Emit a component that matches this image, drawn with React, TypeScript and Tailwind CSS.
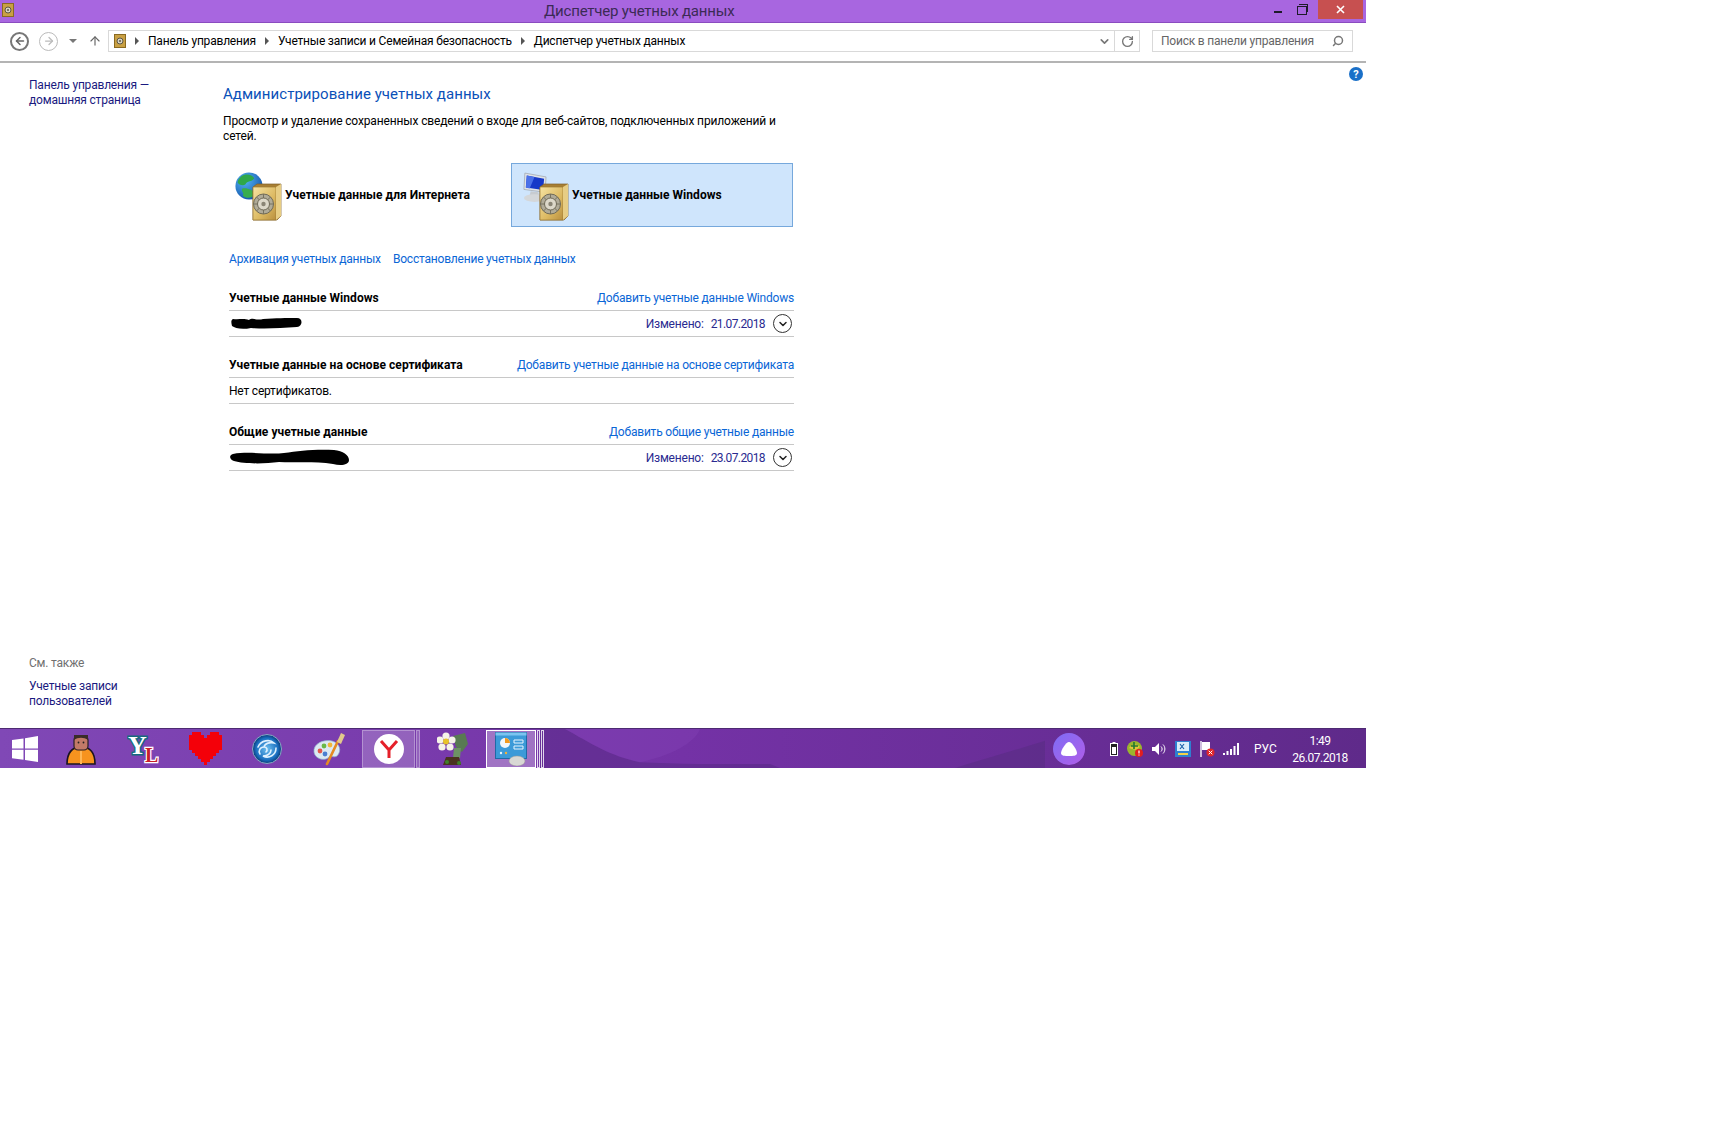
import { ChevronDown, RotateCw, Search, ArrowUp, ArrowLeft, ArrowRight } from 'lucide-react';

const font = { fontFamily: 'Roboto, "Open Sans", sans-serif' };

const Safe = ({ className = '', id }: { className?: string; id: string }) => (
  <svg viewBox="0 0 30 38" className={className}>
    <defs>
      <linearGradient id={id} x1="0" y1="0" x2="1" y2="1">
        <stop offset="0" stopColor="#f6e3a2" />
        <stop offset="0.6" stopColor="#dcb961" />
        <stop offset="1" stopColor="#b98f3e" />
      </linearGradient>
    </defs>
    <path d="M1 4 L5 1 L29 1 L29 33 L25 37 L1 37 Z" fill="#a87f33" stroke="#80602a" strokeWidth="0.7" />
    <path d="M1 4 L24 4 L24 37 L1 37 Z" fill={`url(#${id})`} stroke="#9c7831" strokeWidth="0.7" />
    <path d="M24 4 L29 1 L29 33 L24 37 Z" fill="#e7cd84" />
    <circle cx="11.5" cy="21" r="10" fill="#b0ab98" stroke="#6f6a58" strokeWidth="1" />
    <path d="M4.5 14 L18.5 28 M18.5 14 L4.5 28 M11.5 11 V31 M1.5 21 H21.5" stroke="#77725f" strokeWidth="1" />
    <circle cx="11.5" cy="21" r="6" fill="#dcd8c9" stroke="#6f6a58" strokeWidth="1" />
    <circle cx="11.5" cy="21" r="2.2" fill="#8a8575" />
  </svg>
);

const MiniSafe = ({ className = '' }: { className?: string }) => (
  <svg viewBox="0 0 12 14" className={className}>
    <rect x="0.5" y="0.5" width="11" height="13" fill="#c9a043" stroke="#8a6a20" />
    <circle cx="6" cy="7" r="3" fill="#d9d4c0" stroke="#5c5647" />
    <circle cx="6" cy="7" r="1" fill="#5c5647" />
  </svg>
);

const Globe = () => (
  <svg viewBox="0 0 32 32" className="w-[28px] h-[28px]">
    <defs>
      <radialGradient id="globeSea" cx="0.35" cy="0.3" r="0.8">
        <stop offset="0" stopColor="#53b4f2" />
        <stop offset="1" stopColor="#0f4fa8" />
      </radialGradient>
    </defs>
    <circle cx="16" cy="16" r="15.5" fill="url(#globeSea)" />
    <path d="M7 5 C12 1 20 3 22 7 C19 12 14 9 12 14 C9 17 4 14 3 12 C3 9 5 7 7 5 Z" fill="#2fa84a" />
    <path d="M8 19 C13 17 20 21 24 24 C21 30 13 31 9 27 C11 24 7 22 8 19 Z" fill="#38ad4e" />
  </svg>
);

const Monitor = () => (
  <svg viewBox="0 0 26 32" className="w-[25px] h-[31px]">
    <path d="M3 1 L25 5 L24 21 L2 18 Z" fill="#dfe3e8" stroke="#9aa0a8" strokeWidth="0.7" />
    <path d="M5 3.5 L23 7 L22 18.5 L4 16 Z" fill="#1638c8" />
    <path d="M5 3.5 L13 5 L8 17 L4 16 Z" fill="#4a70e8" />
    <path d="M9 20 L17 21 L18 25 L8 24 Z" fill="#c7cbd0" />
    <ellipse cx="13" cy="27" rx="11" ry="4" fill="#d4d7da" />
  </svg>
);

const Tile = ({ icon, label, active, id }: { icon: React.ReactNode; label: string; active?: boolean; id: string }) => (
  <div
    className={
      active
        ? 'flex items-center h-[64px] w-[282px] border border-[#76a8dc] bg-[#cfe5fc] pl-[10px]'
        : 'flex items-center h-[64px] w-[288px] border border-transparent pl-[11px]'
    }
  >
    <div className="relative w-[47px] h-[49px] shrink-0 self-start mt-[8px]">
      {icon}
      <Safe id={id} className="absolute right-0 bottom-0 w-[30px] h-[38px]" />
    </div>
    <span className="ml-[3px] text-[12px] font-bold tracking-[0.05px] text-black">{label}</span>
  </div>
);

const Blob = ({ w, h, d }: { w: number; h: number; d: string }) => (
  <svg width={w} height={h} viewBox={`0 0 ${w} ${h}`}>
    <path d={d} fill="#000" />
  </svg>
);

const Expand = () => (
  <span className="w-[19px] h-[19px] rounded-full border border-[#333] flex items-center justify-center">
    <ChevronDown size={12} strokeWidth={3} color="#222" />
  </span>
);

const Section = ({ title, link, children }: { title: string; link: string; children: React.ReactNode }) => (
  <section className="w-[565px]">
    <div className="flex justify-between items-center h-[25px] border-b border-[#c8c8c8] pb-[1px]">
      <span className="text-[12px] font-bold tracking-[0.05px] text-black">{title}</span>
      <span className="text-[12px] text-[#0a66d6]">{link}</span>
    </div>
    <div className="flex items-center justify-between h-[26px] border-b border-[#c8c8c8]">{children}</div>
  </section>
);

const Changed = ({ date }: { date: string }) => (
  <div className="flex items-center text-[12px] text-[#2a2a90]">
    <span>Изменено:</span>
    <span className="ml-[7px] tracking-[-0.6px]">{date}</span>
    <span className="ml-[8px] mr-[2px]">
      <Expand />
    </span>
  </div>
);

const Crumb = ({ label }: { label: string }) => (
  <>
    <span className="mx-[9px] w-0 h-0 border-y-[4px] border-y-transparent border-l-[4px] border-l-[#555]" />
    <span>{label}</span>
  </>
);

const Slot = ({ children, className = 'w-[62px]' }: { children: React.ReactNode; className?: string }) => (
  <div className={`${className} h-full flex items-center justify-center shrink-0`}>{children}</div>
);

const WinLogo = () => (
  <svg viewBox="0 0 26 26" className="w-[26px] h-[26px]">
    <path d="M0 4 L11.5 2.4 V12.4 H0 Z M13 2.2 L26 0 V12.4 H13 Z M0 13.8 H11.5 V23.8 L0 22.2 Z M13 13.8 H26 V26 L13 24 Z" fill="#fff" />
  </svg>
);

const Person = () => (
  <svg viewBox="0 0 30 32" className="w-[30px] h-[32px]">
    <path d="M1 31 C1 20 6 14 15 14 C24 14 29 20 29 31 Z" fill="#f7931e" stroke="#1a1420" strokeWidth="1.6" />
    <path d="M15 18v13" stroke="#ffb655" strokeWidth="2" />
    <rect x="8" y="3" width="14" height="14" rx="4" fill="#c27a68" stroke="#2b2026" strokeWidth="1.2" />
    <path d="M8 7 V2 H22 V7 C18 4 12 4 8 7 Z" fill="#3a2c28" />
    <circle cx="12.5" cy="9.5" r="0.9" fill="#222" />
    <circle cx="17.5" cy="9.5" r="0.9" fill="#222" />
  </svg>
);

const YL = () => (
  <svg viewBox="0 -3 32 38" className="w-[32px] h-[38px]">
    <text x="1" y="21" fontFamily="Liberation Serif" fontWeight="700" fontSize="26" fill="#fff" stroke="#16697f" strokeWidth="3" paintOrder="stroke">Y</text>
    <text x="18" y="29" fontFamily="Liberation Serif" fontWeight="700" fontSize="20" fill="#c8202a" stroke="#fff" strokeWidth="2.4" paintOrder="stroke">L</text>
  </svg>
);

const Heart = () => (
  <svg viewBox="0 0 11 11" className="w-[33px] h-[33px]" shapeRendering="crispEdges">
    <path d="M1 0 H4 V1 H5 V2 H6 V1 H7 V0 H10 V1 H11 V6 H10 V7 H9 V8 H8 V9 H7 V10 H6 V11 H5 V10 H4 V9 H3 V8 H2 V7 H1 V6 H0 V1 H1 Z" fill="#f40009" />
  </svg>
);

const Spiral = () => (
  <svg viewBox="0 0 30 30" className="w-[30px] h-[30px]">
    <defs>
      <radialGradient id="spiralBg">
        <stop offset="0" stopColor="#6fc0f0" />
        <stop offset="0.75" stopColor="#1a6fc0" />
        <stop offset="1" stopColor="#0b3c78" />
      </radialGradient>
    </defs>
    <circle cx="15" cy="15" r="14.5" fill="url(#spiralBg)" stroke="#8aa8c4" />
    <path d="M6 13 C9 6 18 5 22 9 C18 8 13 9 12 13 M24 14 C24 21 17 25 11 22 C15 22 19 20 19 16 M8 20 C6 17 8 13 12 13 C15 13 16 16 14 18" fill="none" stroke="#dff1ff" strokeWidth="1.6" strokeLinecap="round" />
  </svg>
);

const Palette = () => (
  <svg viewBox="0 0 34 34" className="w-[34px] h-[34px]">
    <path d="M2 20 C1 12 11 7 20 9 C28 11 30 19 25 24 C22 26 19 23 16 26 C12 29 3 27 2 20 Z" fill="#dce9f2" stroke="#8fb4cc" strokeWidth="0.7" />
    <circle cx="8" cy="19" r="2.4" fill="#e4574c" />
    <circle cx="12" cy="14" r="2.4" fill="#6ab845" />
    <circle cx="18" cy="13" r="2.4" fill="#f0b63a" />
    <circle cx="13" cy="22" r="2.4" fill="#4a7fd0" />
    <path d="M15 32 L26 9" stroke="#e58a22" strokeWidth="2.6" strokeLinecap="round" />
    <path d="M25 10 L29 1 L33 3 L29 12 Z" fill="#e2c98c" />
  </svg>
);

const YandexCircle = () => (
  <span className="w-[30px] h-[30px] rounded-full bg-white flex items-center justify-center">
    <svg viewBox="0 0 20 20" className="w-[20px] h-[20px]">
      <path d="M2 2 L10 11 L18 2 M10 11 V19" fill="none" stroke="#e5202a" strokeWidth="3" />
    </svg>
  </span>
);

const Flower = () => (
  <svg viewBox="0 0 32 34" className="w-[32px] h-[34px]">
    <path d="M16 4 L28 1 L31 12 L25 20 L19 15 Z" fill="#587a52" />
    <path d="M17 16 L24 16 L23 26 L16 26 Z" fill="#6d9265" />
    <path d="M9 25 L22 25 L24 33 L6 33 Z" fill="#4a3220" />
    <circle cx="10" cy="30" r="2" fill="#3f7f2a" />
    <circle cx="22" cy="31" r="2" fill="#3f7f2a" />
    <g fill="#f6f3e8">
      <circle cx="9" cy="4" r="3.6" />
      <circle cx="15" cy="8" r="3.6" />
      <circle cx="13" cy="15" r="3.6" />
      <circle cx="5" cy="15" r="3.6" />
      <circle cx="3" cy="8" r="3.6" />
    </g>
    <circle cx="9" cy="9.5" r="3" fill="#e8c22a" />
  </svg>
);

const ControlPanel = () => (
  <svg viewBox="0 0 32 34" className="w-[32px] h-[34px]">
    <rect x="0.5" y="0.5" width="31" height="26" fill="#3c9ad8" stroke="#1f6aa6" />
    <rect x="0.5" y="0.5" width="31" height="3" fill="#7cc4f0" />
    <circle cx="10" cy="11" r="5" fill="#f2f6fa" />
    <path d="M10 11 V6 A5 5 0 0 1 15 11 Z" fill="#f39a1e" />
    <path d="M19 8h9v3h-9z M19 14h9v3h-9z" fill="none" stroke="#e8f5ff" />
    <circle cx="6" cy="21" r="1.2" fill="#e8f5ff" />
    <circle cx="11" cy="21" r="1.2" fill="#f3b23a" />
    <ellipse cx="22" cy="29" rx="8" ry="5" fill="#d8d8d4" stroke="#9a9a96" strokeWidth="0.5" />
  </svg>
);

const Tray = () => (
  <div className="ml-auto flex items-center h-full">
    <span className="w-[32px] h-[32px] rounded-full bg-gradient-to-br from-[#7c6cf5] to-[#b05ce8] flex items-center justify-center">
      <svg viewBox="0 0 16 14" className="w-[16px] h-[14px]">
        <path d="M8 0 C11 0 16 8 16 11 C16 14 12 14 8 14 C4 14 0 14 0 11 C0 8 5 0 8 0 Z" fill="#fff" />
      </svg>
    </span>
    <svg viewBox="0 0 8 14" className="ml-[25px] w-[8px] h-[14px]">
      <rect x="2.5" y="0" width="3" height="2" fill="#fff" />
      <rect x="0.5" y="1.5" width="7" height="12" fill="#222" stroke="#fff" />
      <rect x="2" y="5" width="4" height="7" fill="#fff" />
    </svg>
    <svg viewBox="0 0 16 16" className="ml-[9px] w-[16px] h-[16px]">
      <circle cx="7.5" cy="7.5" r="7.5" fill="#9ab52e" />
      <path d="M2 7 C6 2 10 3 13 6 L9 9 L5 8 Z" fill="#e8c43a" />
      <path d="M7 1 v7 M4 5 h7" stroke="#1f7a30" strokeWidth="1.6" />
      <circle cx="12" cy="12" r="4" fill="#e01f1f" />
      <path d="M12 9.5 v3 M12 13.5 v1" stroke="#fff" strokeWidth="1.2" />
    </svg>
    <svg viewBox="0 0 14 14" className="ml-[9px] w-[14px] h-[14px]">
      <path d="M0 5 H3 L7 1 V13 L3 9 H0 Z" fill="#fff" />
      <path d="M9 4.5 C10.5 6 10.5 8 9 9.5 M11 2.5 C13.5 5 13.5 9 11 11.5" fill="none" stroke="#fff" />
    </svg>
    <svg viewBox="0 0 16 16" className="ml-[9px] w-[16px] h-[16px]">
      <rect width="16" height="16" fill="#2f7fd0" />
      <rect x="2" y="1" width="12" height="9" fill="#d8ecfa" />
      <path d="M5 3 L9 8 M9 3 L5 8" stroke="#1a5fa8" strokeWidth="1.2" />
      <path d="M3 13 H13" stroke="#f2d24a" strokeWidth="2" />
    </svg>
    <svg viewBox="0 0 15 16" className="ml-[9px] w-[15px] h-[16px]">
      <path d="M1 0 V16" stroke="#fff" strokeWidth="1.4" />
      <path d="M2 1 H10 V9 H2 Z" fill="#fff" />
      <circle cx="10.5" cy="11.5" r="4" fill="#e0262a" />
      <path d="M8.7 9.7 L12.3 13.3 M12.3 9.7 L8.7 13.3" stroke="#fff" />
    </svg>
    <svg viewBox="0 0 16 12" className="ml-[8px] w-[16px] h-[12px]">
      <path d="M0 10h2v2H0z M3.5 8h2v4h-2z M7 6h2v6H7z M10.5 3h2v9h-2z M14 0h2v12h-2z" fill="#fff" />
    </svg>
    <span className="ml-[15px] w-[22px] text-[12px] tracking-normal text-white">РУС</span>
    <div className="ml-[17px] mr-[19px] w-[54px] pt-[3px] flex flex-col items-center text-[12px] leading-[17px] tracking-[-0.5px] text-white">
      <span>1:49</span>
      <span>26.07.2018</span>
    </div>
  </div>
);

export default function App() {
  return (
    <div className="w-[1366px] h-[768px] flex flex-col bg-white text-[12px] tracking-[-0.2px] text-black" style={font}>
      <header className="h-[23px] shrink-0 flex bg-[#a866e0] border-b border-[#8a4cc0]">
        <MiniSafe className="mt-[3px] ml-[2px] w-[12px] h-[14px]" />
        <span className="ml-[530px] text-[15px] leading-[23px] text-[#3b2a55]">Диспетчер учетных данных</span>
        <div className="ml-auto mr-[3px] flex items-start">
          <span className="mt-[11px] w-[8px] h-[2px] bg-[#1d1a2a]" />
          <span className="relative ml-[15px] mt-[6px] w-[10px] h-[9px] border border-[#1d1a2a]">
            <span className="absolute -top-[3px] left-[1px] w-[9px] h-[8px] border-t border-r border-[#1d1a2a]" />
          </span>
          <div className="ml-[11px] w-[45px] h-[19px] bg-[#c75050] flex items-center justify-center">
            <svg viewBox="0 0 9 9" className="w-[9px] h-[9px]">
              <path d="M1 1 L8 8 M8 1 L1 8" stroke="#fff" strokeWidth="1.6" />
            </svg>
          </div>
        </div>
      </header>

      <div className="h-[40px] shrink-0 flex items-center border-b-2 border-b-[#b4b4b4] pb-[2px]">
        <span className="ml-[10px] w-[19px] h-[19px] rounded-full border-2 border-[#777] flex items-center justify-center">
          <ArrowLeft size={12} strokeWidth={3} color="#666" />
        </span>
        <span className="ml-[10px] w-[19px] h-[19px] rounded-full border border-[#bbb] flex items-center justify-center">
          <ArrowRight size={12} strokeWidth={2.5} color="#bbb" />
        </span>
        <span className="ml-[11px] w-0 h-0 border-x-[4px] border-x-transparent border-t-[4px] border-t-[#777]" />
        <ArrowUp size={14} strokeWidth={2} color="#666" className="ml-[11px]" />
        <div className="ml-[6px] w-[1032px] h-[22px] flex items-center border border-[#d9d9d9]">
          <MiniSafe className="ml-[5px] w-[12px] h-[14px]" />
          <Crumb label="Панель управления" />
          <Crumb label="Учетные записи и Семейная безопасность" />
          <Crumb label="Диспетчер учетных данных" />
          <ChevronDown size={13} strokeWidth={3} color="#777" className="ml-auto mr-[3px]" />
          <div className="h-full w-[25px] border-l border-[#d9d9d9] flex items-center justify-center">
            <RotateCw size={13} strokeWidth={2.5} color="#777" />
          </div>
        </div>
        <div className="ml-[12px] w-[201px] h-[22px] flex items-center justify-between border border-[#d9d9d9] px-[8px] text-[#666]">
          <span>Поиск в панели управления</span>
          <Search size={12} strokeWidth={3} color="#777" className="-scale-x-100" />
        </div>
      </div>

      <main className="flex-1 flex">
        <aside className="w-[223px] shrink-0 flex flex-col justify-between pl-[29px] pt-[15px] pb-[19px] leading-[15px] text-[#1a1a80]">
          <div>
            Панель управления —
            <br />
            домашняя страница
          </div>
          <div>
            <div className="text-[#707070] mb-[8px]">См. также</div>
            Учетные записи
            <br />
            пользователей
          </div>
        </aside>
        <div className="w-[575px] shrink-0 pt-[21px]">
          <h1 className="text-[15px] leading-[20px] font-normal tracking-[0.05px] text-[#0a50b8]">Администрирование учетных данных</h1>
          <p className="mt-[10px] w-[565px] leading-[15px] tracking-[-0.14px]">
            Просмотр и удаление сохраненных сведений о входе для веб-сайтов, подключенных приложений и
            <br />
            сетей.
          </p>
          <div className="mt-[19px] flex">
            <Tile id="safeA" label="Учетные данные для Интернета" icon={<div className="absolute left-0 top-0"><Globe /></div>} />
            <Tile id="safeB" active label="Учетные данные Windows" icon={<div className="absolute left-0 top-0"><Monitor /></div>} />
          </div>
          <div className="mt-[23px] ml-[6px] flex gap-[12px] text-[#0a66d6]">
            <span>Архивация учетных данных</span>
            <span>Восстановление учетных данных</span>
          </div>
          <div className="ml-[6px] mt-[18px] flex flex-col gap-[16px]">
            <Section title="Учетные данные Windows" link="Добавить учетные данные Windows">
              <span className="ml-[2px]">
                <Blob w={71} h={13} d="M2 2 C8 3 12 1 18 3 C22 0 26 4 32 2 C45 1 55 1 66 1 C72 1 72 9 66 10 C50 11 35 12 20 11 C10 13 4 11 1 9 C0 5 0 3 2 2 Z" />
              </span>
              <Changed date="21.07.2018" />
            </Section>
            <Section title="Учетные данные на основе сертификата" link="Добавить учетные данные на основе сертификата">
              <span>Нет сертификатов.</span>
            </Section>
            <Section title="Общие учетные данные" link="Добавить общие учетные данные">
              <Blob w={120} h={17} d="M4 5 C20 2 40 6 55 4 C70 2 85 0 105 1 C114 2 120 6 120 11 C120 16 112 17 104 15 C85 12 65 14 50 13 C35 15 15 15 5 12 C0 10 0 6 4 5 Z" />
              <Changed date="23.07.2018" />
            </Section>
          </div>
        </div>
        <div className="ml-auto mr-[3px] mt-[4px] w-[14px] h-[14px] rounded-full bg-[#1a70c8] flex items-center justify-center text-[11px] font-bold leading-none text-white">
          ?
        </div>
      </main>

      <footer className="relative h-[40px] shrink-0 flex items-center border-t border-[#4d2a72] bg-gradient-to-r from-[#8048b6] via-[#7432a6] to-[#5f2a8a] overflow-hidden">
        <svg viewBox="0 0 1366 40" className="absolute inset-0 w-full h-full" preserveAspectRatio="none">
          <path d="M540 0 L565 0 C590 14 610 28 640 34 C680 36 720 36 770 36 L780 40 L540 40 Z" fill="#53277f" opacity="0.45" />
          <path d="M565 0 L700 0 C695 14 670 28 640 34 C610 28 590 14 565 0 Z" fill="#8a4cc0" opacity="0.25" />
          <path d="M955 40 C985 30 1015 22 1045 12 L1045 40 Z" fill="#4a2a72" opacity="0.3" />
        </svg>
        <div className="relative flex items-center h-full w-full">
          <Slot className="w-[50px]"><WinLogo /></Slot>
          <Slot><Person /></Slot>
          <Slot><YL /></Slot>
          <Slot><Heart /></Slot>
          <Slot><Spiral /></Slot>
          <Slot className="w-[62px]"><Palette /></Slot>
          <div className="ml-[2px] w-[53px] h-[38px] flex items-center justify-center bg-white/20 border border-white/30">
            <YandexCircle />
          </div>
          <div className="ml-[1px] w-[4px] h-[38px] bg-white/20 border border-white/30" />
          <Slot className="w-[66px]"><Flower /></Slot>
          <div className="w-[50px] h-[38px] flex items-center justify-center bg-white/30 border border-white">
            <ControlPanel />
          </div>
          <div className="ml-[1px] w-[3px] h-[38px] border border-white/80" />
          <div className="ml-[1px] w-[3px] h-[38px] border border-white/80" />
          <Tray />
        </div>
      </footer>
    </div>
  );
}
